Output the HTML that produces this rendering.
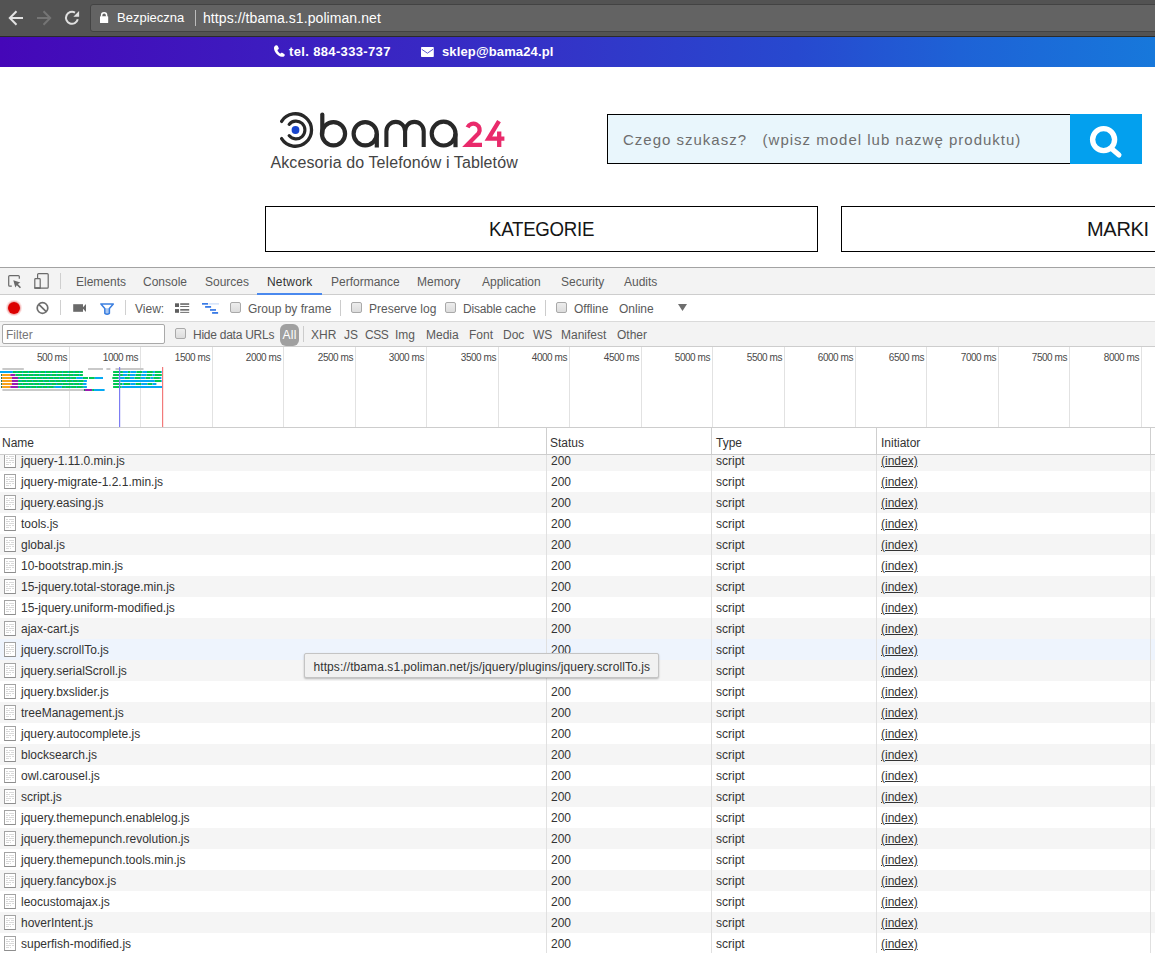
<!DOCTYPE html>
<html><head><meta charset="utf-8">
<style>
*{box-sizing:border-box;margin:0;padding:0}
html,body{width:1155px;height:953px;overflow:hidden;background:#fff;font-family:"Liberation Sans",sans-serif}
.a{position:absolute}
#chrome{position:absolute;left:0;top:0;width:1155px;height:37px;background:#535353;border-bottom:1px solid #2b2b2b}
#omni{position:absolute;left:90px;top:4px;width:1080px;height:28px;background:#636363;border:1px solid #434343;border-radius:3px}
#topbar{position:absolute;left:0;top:37px;width:1155px;height:30px;background:linear-gradient(90deg,#4507b8 0%,#3530c6 45%,#2749cf 69%,#1e62d6 83%,#1778db 100%)}
.tb{position:absolute;color:#fff;font-weight:bold;font-size:13px;top:44px;letter-spacing:0.3px}
.box{position:absolute;border:1px solid #000;background:#fff}
.navt{position:absolute;font-size:20px;color:#151515;top:217px;letter-spacing:-1.35px}
#dt{position:absolute;left:0;top:267px;width:1155px;height:686px;background:#fff;font-size:12px;color:#333}
#tabs{position:absolute;left:0;top:0;width:1155px;height:28px;background:#f3f3f3;border-top:1px solid #a3a3a3;border-bottom:1px solid #cdcdcd}
.tab{position:absolute;top:7px;color:#5a5a5a;font-size:12px;white-space:pre}
#tb2{position:absolute;left:0;top:28px;width:1155px;height:27px;background:#fff;border-bottom:1px solid #dadada}
#tb3{position:absolute;left:0;top:55px;width:1155px;height:25px;background:#f3f3f3;border-bottom:1px solid #cdcdcd}
.sep{position:absolute;width:1px;background:#ccc}
.lbl{position:absolute;color:#5a5a5a;font-size:12px;white-space:pre}
.cb{position:absolute;width:11px;height:11px;border:1px solid #a9a9a9;border-radius:2px;background:linear-gradient(#ededed,#dcdcdc)}
#ov{position:absolute;left:0;top:80px;width:1155px;height:81px;background:#fff;border-bottom:1px solid #cdcdcd}
.gl{position:absolute;top:0;width:1px;height:80px;background:#e2e2e2}
.tl{position:absolute;top:5px;width:58px;text-align:right;font-size:10px;color:#4a4a4a;white-space:pre;letter-spacing:-0.45px}
#hdr{position:absolute;left:0;top:161px;width:1155px;height:27px;background:#fff;border-bottom:1px solid #cdcdcd}
.hc{position:absolute;top:9px;font-size:12px;color:#333}
.vl{position:absolute;width:1px;background:#d0d0d0}
.r{position:absolute;left:0;width:1155px;height:21px;background:#fff}
.r.g{background:#f5f5f5}
.r.h{background:#eef4fd}
.r span{position:absolute;top:4px;font-size:12px;color:#333;white-space:pre}
.c0{left:21px} .c1{left:551px} .c2{left:716px} .c3{left:881px;text-decoration:underline}
.fi{position:absolute;left:4px;top:3px;width:12px;height:15px}
#tip{position:absolute;left:304px;top:653px;width:355px;height:25px;background:#f1f1f1;border:1px solid #c4c4c4;border-radius:2px;box-shadow:0 1px 2px rgba(0,0,0,.25);font-size:12px;color:#333;padding:6px 0 0 8.5px;white-space:pre;letter-spacing:0.08px}
</style></head><body>

<div id="chrome">
 <svg class="a" style="left:0;top:0" width="90" height="36">
  <path d="M23 18H10M16.5 11.3L9.8 18L16.5 24.7" stroke="#e2e2e2" stroke-width="2" fill="none"/>
  <path d="M37 18H50M43.5 11.3L50.2 18L43.5 24.7" stroke="#757575" stroke-width="2" fill="none"/>
  <path d="M77.8 19.35A6 6 0 1 1 75 12.6" stroke="#e0e0e0" stroke-width="2" fill="none"/>
  <path d="M79.1 10.9V16.8H73.3z" fill="#e0e0e0"/>
 </svg>
 <div id="omni"></div>
 <svg class="a" style="left:96px;top:8px" width="16" height="20">
  <path d="M5.6 8.8V7.3A2.5 2.5 0 0 1 10.6 7.3V8.8" stroke="#fff" stroke-width="1.5" fill="none"/>
  <rect x="4" y="8.2" width="8.2" height="6.9" fill="#fff" rx="0.6"/>
 </svg>
 <div class="a" style="left:117px;top:10px;font-size:13px;color:#fff">Bezpieczna</div>
 <div class="a" style="left:195px;top:10px;width:1px;height:16px;background:#bcbcbc"></div>
 <div class="a" style="left:203px;top:10px;font-size:14px;color:#fff;letter-spacing:0.07px">https://tbama.s1.poliman.net</div>
</div>
<div id="topbar"></div>
<svg class="a" style="left:273px;top:44px" width="12" height="14"><path d="M2.5 1.5c1-.6 1.8-.3 2.3.6l.9 1.8c.3.7 0 1.2-.6 1.6l-.7.5c.5 1.6 1.5 2.8 2.9 3.7l.6-.6c.5-.5 1.1-.6 1.7-.2l1.6 1.1c.7.5.8 1.2.2 1.9-.7.8-1.5 1.1-2.5.9C4.500 11.7 1.5 8.2 1 4.400.9 3.200 1.500 2.100 2.500 1.500z" fill="#fff"/></svg>
<div class="tb" style="left:289px;letter-spacing:0.35px">tel. 884-333-737</div>
<svg class="a" style="left:421px;top:47px" width="13" height="10"><rect x="0" y="0" width="12.8" height="10" rx="0.8" fill="#fff"/><path d="M0.6 2.2L6.4 6.2L12.2 2.2" stroke="#4a46c8" stroke-width="0.9" fill="none"/></svg>
<div class="tb" style="left:442px;letter-spacing:0.13px">sklep@bama24.pl</div>

<svg class="a" style="left:270px;top:108px" width="250" height="66">
 <g fill="none" stroke="#282828">
  <path d="M11.6 13.4A16.2 16.2 0 1 1 11.6 30.6" stroke-width="3.3" stroke-linecap="round"/>
  <path d="M19.1 16.4A8.9 8.9 0 1 1 19.1 27.6" stroke-width="3.1" stroke-linecap="round"/>
  <circle cx="63.5" cy="25.8" r="11.6" stroke-width="4.2"/>
  <path d="M52.3 6.5V25.8" stroke-width="4.2" stroke-linecap="round"/>
  <circle cx="95.2" cy="25.8" r="11.6" stroke-width="4.2"/>
  <path d="M106.8 25.8V39.5" stroke-width="4.2"/>
  <path d="M116.4 39V23.2A9.35 9.35 0 0 1 135.1 23.2V39M135.1 23.2A9.3 9.3 0 0 1 153.7 23.2V39" stroke-width="4.1"/>
  <circle cx="173.6" cy="25.6" r="11.9" stroke-width="4.2"/>
  <path d="M185.5 25.6V39.2" stroke-width="4.2"/>
 </g>
 <g fill="none" stroke="#e92a6b" stroke-width="4.3">
  <path d="M197.6 19.3A6.3 6.3 0 1 1 208.7 25.2L197.3 36.8H212" stroke-linejoin="miter"/>
  <path d="M229 13.2L218.4 30.6H234.4M229.2 23.5V39" stroke-linejoin="miter"/>
 </g>
 <circle cx="25.5" cy="22" r="3.9" fill="#1744cc"/>
 <text x="0.5" y="60" font-family="Liberation Sans" font-size="16" fill="#444" letter-spacing="0.1">Akcesoria do Telefonów i Tabletów</text>
</svg>

<div class="a" style="left:607px;top:114px;width:464px;height:50px;border:1px solid #000;border-right:none;background:#e9f6fc"></div>
<div class="a" style="left:623px;top:131px;font-size:15px;color:#6e6e6e;letter-spacing:1px;white-space:pre">Czego szukasz?   (wpisz model lub nazwę produktu)</div>
<div class="a" style="left:1070px;top:114px;width:72px;height:50px;background:#03a0ee"></div>
<svg class="a" style="left:1070px;top:114px" width="72" height="50"><circle cx="33.6" cy="25.6" r="11" stroke="#fff" stroke-width="5.4" fill="none"/><path d="M42 35l7 6" stroke="#fff" stroke-width="5" stroke-linecap="round"/></svg>

<div class="box" style="left:265px;top:206px;width:553px;height:46px"></div>
<div class="navt" style="left:488.5px;top:218px;letter-spacing:-0.3px;transform:scaleX(0.935);transform-origin:0 0">KATEGORIE</div>
<div class="box" style="left:841px;top:206px;width:330px;height:46px"></div>
<div class="navt" style="left:1087px;top:218px;letter-spacing:-0.3px;transform:scaleX(1.0);transform-origin:0 0">MARKI</div>

<div id="dt">
 <div id="tabs">
  <svg class="a" style="left:0;top:0" width="70" height="27">
   <path d="M11.8 18.2H9.7A1 1 0 0 1 8.7 17.2V8.6A1 1 0 0 1 9.7 7.6H18.3A1 1 0 0 1 19.3 8.6V10.8" stroke="#6a6a6a" stroke-width="1.2" fill="none"/>
   <path d="M13.3 12.2L20.3 14.6L17.9 16.1L21 19.2L19.9 20.3L16.8 17.2L15.3 19.6Z" fill="#6a6a6a"/>
   <rect x="37.6" y="5.6" width="10.6" height="14.6" rx="1" fill="none" stroke="#6a6a6a" stroke-width="1.2"/>
   <rect x="34.8" y="10.7" width="5.4" height="9.5" rx="0.8" fill="#f3f3f3" stroke="#6a6a6a" stroke-width="1.2"/>
   <rect x="34.3" y="19.2" width="6.3" height="1.6" fill="#6a6a6a"/>
   <rect x="60" y="5" width="1" height="16" fill="#cfcfcf"/>
  </svg>
  <span class="tab" style="left:76px">Elements</span>
  <span class="tab" style="left:143px">Console</span>
  <span class="tab" style="left:205px">Sources</span>
  <span class="tab" style="left:267px;color:#333;letter-spacing:0.2px">Network</span>
  <div class="a" style="left:257px;top:25px;width:65px;height:2px;background:#4a89ee"></div>
  <span class="tab" style="left:331px">Performance</span>
  <span class="tab" style="left:417px">Memory</span>
  <span class="tab" style="left:482px">Application</span>
  <span class="tab" style="left:561px">Security</span>
  <span class="tab" style="left:624px">Audits</span>
 </div>
 <div id="tb2">
  <svg class="a" style="left:0;top:0" width="230" height="26">
   <circle cx="14" cy="13" r="8" fill="#fbe3e3"/><circle cx="14" cy="13" r="7" fill="#f3b3b3"/>
   <circle cx="14" cy="13" r="6" fill="#dc0000"/>
   <circle cx="42.5" cy="13" r="5.3" stroke="#6e6e6e" stroke-width="1.7" fill="none"/>
   <path d="M38.8 9.3l7.4 7.4" stroke="#6e6e6e" stroke-width="1.7"/>
   <rect x="60" y="5" width="1" height="15" fill="#d0d0d0"/>
   <rect x="73.2" y="9.2" width="9.8" height="7.6" fill="#6a6a6a"/>
   <path d="M82.3 13L86 9V17z" fill="#6a6a6a"/>
   <path d="M104.8 13.3H109.4V18.3Q107.1 20 104.8 18.3Z" fill="#a9c7f2"/><path d="M100.9 8.9H113.3L109.4 13.6V18.3Q107.1 20 104.8 18.3V13.6Z" fill="none" stroke="#3b7fe0" stroke-width="1.5" stroke-linejoin="round"/>
   <rect x="125" y="5" width="1" height="15" fill="#d0d0d0"/>
   <g fill="#5f5f5f"><rect x="175" y="8.3" width="4" height="3.7"/><rect x="180.2" y="8.3" width="9" height="1.5"/><rect x="180.2" y="11.1" width="9" height="0.9"/>
   <rect x="175" y="14.1" width="4" height="3.7"/><rect x="180.2" y="14.1" width="9" height="1.5"/><rect x="180.2" y="16.9" width="9" height="0.9"/></g>
   <rect x="208.5" y="8" width="10.5" height="1.7" fill="#d8e5fb"/>
   <g fill="#3a7be6"><rect x="202" y="8" width="6" height="1.7"/><rect x="205.1" y="11" width="6" height="1.8"/><rect x="210" y="14.1" width="6" height="1.7"/><rect x="212.1" y="17" width="6" height="1.8"/></g>
  </svg>
  <span class="lbl" style="left:135px;top:7px">View:</span>
  <i class="cb" style="left:230px;top:7px"></i>
  <span class="lbl" style="left:248px;top:7px">Group by frame</span>
  <div class="sep" style="left:340px;top:5px;height:16px"></div>
  <i class="cb" style="left:351px;top:7px"></i>
  <span class="lbl" style="left:369px;top:7px">Preserve log</span>
  <i class="cb" style="left:445px;top:7px"></i>
  <span class="lbl" style="left:463px;top:7px;letter-spacing:-0.2px">Disable cache</span>
  <div class="sep" style="left:545px;top:5px;height:16px"></div>
  <i class="cb" style="left:556px;top:7px"></i>
  <span class="lbl" style="left:574px;top:7px">Offline</span>
  <span class="lbl" style="left:619px;top:7px">Online</span>
  <svg class="a" style="left:678px;top:9px" width="10" height="8"><path d="M0 0h9l-4.5 7z" fill="#6e6e6e"/></svg>
 </div>
 <div id="tb3">
  <div class="a" style="left:2px;top:2px;width:163px;height:20px;border:1px solid #a9a9a9;border-radius:2px;background:#fff"></div>
  <span class="lbl" style="left:6px;top:6px;color:#777">Filter</span>
  <i class="cb" style="left:175px;top:6px"></i>
  <span class="lbl" style="left:193px;top:6px;letter-spacing:-0.25px">Hide data URLs</span>
  <div class="a" style="left:280px;top:2px;width:19px;height:22px;border-radius:6px;background:#a0a0a0"></div>
  <span class="lbl" style="left:282.5px;top:6px;color:#fff;letter-spacing:0.3px">All</span>
  <div class="sep" style="left:303px;top:4px;height:16px"></div>
  <span class="lbl" style="left:311px;top:6px">XHR</span>
  <span class="lbl" style="left:344px;top:6px">JS</span>
  <span class="lbl" style="left:365px;top:6px;letter-spacing:-0.4px">CSS</span>
  <span class="lbl" style="left:395px;top:6px">Img</span>
  <span class="lbl" style="left:426px;top:6px">Media</span>
  <span class="lbl" style="left:469px;top:6px">Font</span>
  <span class="lbl" style="left:503px;top:6px">Doc</span>
  <span class="lbl" style="left:533px;top:6px">WS</span>
  <span class="lbl" style="left:561px;top:6px">Manifest</span>
  <span class="lbl" style="left:617px;top:6px">Other</span>
 </div>
 <div id="ov">
<div class="gl" style="left:69px"></div><div class="tl" style="left:9px">500 ms</div>
<div class="gl" style="left:140px"></div><div class="tl" style="left:80px">1000 ms</div>
<div class="gl" style="left:212px"></div><div class="tl" style="left:152px">1500 ms</div>
<div class="gl" style="left:283px"></div><div class="tl" style="left:223px">2000 ms</div>
<div class="gl" style="left:355px"></div><div class="tl" style="left:295px">2500 ms</div>
<div class="gl" style="left:426px"></div><div class="tl" style="left:366px">3000 ms</div>
<div class="gl" style="left:498px"></div><div class="tl" style="left:438px">3500 ms</div>
<div class="gl" style="left:569px"></div><div class="tl" style="left:509px">4000 ms</div>
<div class="gl" style="left:641px"></div><div class="tl" style="left:581px">4500 ms</div>
<div class="gl" style="left:712px"></div><div class="tl" style="left:652px">5000 ms</div>
<div class="gl" style="left:784px"></div><div class="tl" style="left:724px">5500 ms</div>
<div class="gl" style="left:855px"></div><div class="tl" style="left:795px">6000 ms</div>
<div class="gl" style="left:926px"></div><div class="tl" style="left:866px">6500 ms</div>
<div class="gl" style="left:998px"></div><div class="tl" style="left:938px">7000 ms</div>
<div class="gl" style="left:1069px"></div><div class="tl" style="left:1009px">7500 ms</div>
<div class="gl" style="left:1141px"></div><div class="tl" style="left:1081px">8000 ms</div>
  <svg class="a" style="left:0;top:0" width="200" height="80"><rect x="2.4" y="21" width="21.4" height="2" fill="#c9c9c9"/>
<rect x="88.0" y="21" width="15.0" height="2" fill="#c9c9c9"/>
<rect x="106.4" y="21" width="4.0" height="2" fill="#c9c9c9"/>
<rect x="115.5" y="21" width="28.0" height="2" fill="#c9c9c9"/>
<rect x="0.0" y="24" width="12.9" height="2" fill="#03a9f4"/>
<rect x="12.9" y="24" width="70.0" height="2" fill="#00c853"/>
<rect x="113.1" y="24" width="9.8" height="2" fill="#00c853"/>
<rect x="122.9" y="24" width="5.0" height="2" fill="#03a9f4"/>
<rect x="127.9" y="24" width="2.4" height="2" fill="#00c853"/>
<rect x="130.3" y="24" width="6.2" height="2" fill="#03a9f4"/>
<rect x="136.5" y="24" width="5.9" height="2" fill="#00c853"/>
<rect x="142.4" y="24" width="4.6" height="2" fill="#03a9f4"/>
<rect x="147.0" y="24" width="5.9" height="2" fill="#00c853"/>
<rect x="152.9" y="24" width="1.9" height="2" fill="#03a9f4"/>
<rect x="154.8" y="24" width="6.2" height="2" fill="#00c853"/>
<rect x="161.0" y="24" width="0.8" height="2" fill="#03a9f4"/>
<rect x="16.5" y="24" width="1" height="2" fill="#03a9f4" opacity="0.7"/>
<rect x="22.2" y="24" width="1" height="2" fill="#03a9f4" opacity="0.7"/>
<rect x="27.9" y="24" width="1" height="2" fill="#03a9f4" opacity="0.7"/>
<rect x="33.6" y="24" width="1" height="2" fill="#03a9f4" opacity="0.7"/>
<rect x="39.3" y="24" width="1" height="2" fill="#03a9f4" opacity="0.7"/>
<rect x="45.0" y="24" width="1" height="2" fill="#03a9f4" opacity="0.7"/>
<rect x="50.7" y="24" width="1" height="2" fill="#03a9f4" opacity="0.7"/>
<rect x="56.4" y="24" width="1" height="2" fill="#03a9f4" opacity="0.7"/>
<rect x="62.1" y="24" width="1" height="2" fill="#03a9f4" opacity="0.7"/>
<rect x="67.8" y="24" width="1" height="2" fill="#03a9f4" opacity="0.7"/>
<rect x="73.5" y="24" width="1" height="2" fill="#03a9f4" opacity="0.7"/>
<rect x="79.2" y="24" width="1" height="2" fill="#03a9f4" opacity="0.7"/>
<rect x="1.0" y="27" width="1.1" height="2" fill="#2a7a60"/>
<rect x="2.1" y="27" width="8.2" height="2" fill="#f9a21b"/>
<rect x="10.3" y="27" width="5.1" height="2" fill="#9c1ab1"/>
<rect x="15.4" y="27" width="67.5" height="2" fill="#00c853"/>
<rect x="113.1" y="27" width="9.8" height="2" fill="#00c853"/>
<rect x="122.9" y="27" width="4.6" height="2" fill="#03a9f4"/>
<rect x="127.5" y="27" width="2.4" height="2" fill="#00c853"/>
<rect x="129.9" y="27" width="5.8" height="2" fill="#03a9f4"/>
<rect x="135.7" y="27" width="5.5" height="2" fill="#00c853"/>
<rect x="141.2" y="27" width="5.4" height="2" fill="#03a9f4"/>
<rect x="146.6" y="27" width="5.9" height="2" fill="#00c853"/>
<rect x="152.5" y="27" width="2.3" height="2" fill="#03a9f4"/>
<rect x="154.8" y="27" width="7.0" height="2" fill="#00c853"/>
<rect x="22.0" y="27" width="1" height="2" fill="#03a9f4" opacity="0.7"/>
<rect x="27.7" y="27" width="1" height="2" fill="#03a9f4" opacity="0.7"/>
<rect x="33.4" y="27" width="1" height="2" fill="#03a9f4" opacity="0.7"/>
<rect x="39.1" y="27" width="1" height="2" fill="#03a9f4" opacity="0.7"/>
<rect x="44.8" y="27" width="1" height="2" fill="#03a9f4" opacity="0.7"/>
<rect x="50.5" y="27" width="1" height="2" fill="#03a9f4" opacity="0.7"/>
<rect x="56.2" y="27" width="1" height="2" fill="#03a9f4" opacity="0.7"/>
<rect x="61.9" y="27" width="1" height="2" fill="#03a9f4" opacity="0.7"/>
<rect x="67.6" y="27" width="1" height="2" fill="#03a9f4" opacity="0.7"/>
<rect x="73.3" y="27" width="1" height="2" fill="#03a9f4" opacity="0.7"/>
<rect x="79.0" y="27" width="1" height="2" fill="#03a9f4" opacity="0.7"/>
<rect x="1.0" y="30" width="1.1" height="2" fill="#2a7a60"/>
<rect x="2.1" y="30" width="9.8" height="2" fill="#f9a21b"/>
<rect x="11.9" y="30" width="6.2" height="2" fill="#9c1ab1"/>
<rect x="18.1" y="30" width="58.1" height="2" fill="#00c853"/>
<rect x="76.2" y="30" width="6.7" height="2" fill="#03a9f4"/>
<rect x="82.9" y="30" width="5.2" height="2" fill="#00c853"/>
<rect x="89.0" y="30" width="5.8" height="2" fill="#00c853"/>
<rect x="94.8" y="30" width="8.2" height="2" fill="#03a9f4"/>
<rect x="112.3" y="30" width="6.3" height="2" fill="#00c853"/>
<rect x="118.6" y="30" width="6.2" height="2" fill="#03a9f4"/>
<rect x="124.8" y="30" width="5.1" height="2" fill="#00c853"/>
<rect x="129.9" y="30" width="4.7" height="2" fill="#03a9f4"/>
<rect x="134.6" y="30" width="6.2" height="2" fill="#00c853"/>
<rect x="140.8" y="30" width="4.7" height="2" fill="#03a9f4"/>
<rect x="145.5" y="30" width="5.0" height="2" fill="#00c853"/>
<rect x="150.5" y="30" width="2.8" height="2" fill="#03a9f4"/>
<rect x="153.3" y="30" width="6.6" height="2" fill="#00c853"/>
<rect x="159.9" y="30" width="1.5" height="2" fill="#03a9f4"/>
<rect x="19.0" y="30" width="1" height="2" fill="#03a9f4" opacity="0.7"/>
<rect x="24.7" y="30" width="1" height="2" fill="#03a9f4" opacity="0.7"/>
<rect x="30.4" y="30" width="1" height="2" fill="#03a9f4" opacity="0.7"/>
<rect x="36.1" y="30" width="1" height="2" fill="#03a9f4" opacity="0.7"/>
<rect x="41.8" y="30" width="1" height="2" fill="#03a9f4" opacity="0.7"/>
<rect x="47.5" y="30" width="1" height="2" fill="#03a9f4" opacity="0.7"/>
<rect x="53.2" y="30" width="1" height="2" fill="#03a9f4" opacity="0.7"/>
<rect x="58.9" y="30" width="1" height="2" fill="#03a9f4" opacity="0.7"/>
<rect x="64.6" y="30" width="1" height="2" fill="#03a9f4" opacity="0.7"/>
<rect x="70.3" y="30" width="1" height="2" fill="#03a9f4" opacity="0.7"/>
<rect x="1.0" y="33" width="1.1" height="2" fill="#2a7a60"/>
<rect x="2.1" y="33" width="9.8" height="2" fill="#f9a21b"/>
<rect x="11.9" y="33" width="6.2" height="2" fill="#9c1ab1"/>
<rect x="18.1" y="33" width="65.7" height="2" fill="#00c853"/>
<rect x="83.8" y="33" width="3.1" height="2" fill="#03a9f4"/>
<rect x="113.1" y="33" width="7.4" height="2" fill="#00c853"/>
<rect x="120.5" y="33" width="34.3" height="2" fill="#03a9f4"/>
<rect x="154.8" y="33" width="6.2" height="2" fill="#00c853"/>
<rect x="161.0" y="33" width="0.8" height="2" fill="#03a9f4"/>
<rect x="20.5" y="33" width="1" height="2" fill="#03a9f4" opacity="0.7"/>
<rect x="26.2" y="33" width="1" height="2" fill="#03a9f4" opacity="0.7"/>
<rect x="31.9" y="33" width="1" height="2" fill="#03a9f4" opacity="0.7"/>
<rect x="37.6" y="33" width="1" height="2" fill="#03a9f4" opacity="0.7"/>
<rect x="43.3" y="33" width="1" height="2" fill="#03a9f4" opacity="0.7"/>
<rect x="49.0" y="33" width="1" height="2" fill="#03a9f4" opacity="0.7"/>
<rect x="54.7" y="33" width="1" height="2" fill="#03a9f4" opacity="0.7"/>
<rect x="60.4" y="33" width="1" height="2" fill="#03a9f4" opacity="0.7"/>
<rect x="66.1" y="33" width="1" height="2" fill="#03a9f4" opacity="0.7"/>
<rect x="71.8" y="33" width="1" height="2" fill="#03a9f4" opacity="0.7"/>
<rect x="77.5" y="33" width="1" height="2" fill="#03a9f4" opacity="0.7"/>
<rect x="1.0" y="36" width="1.1" height="2" fill="#2a7a60"/>
<rect x="2.1" y="36" width="9.8" height="2" fill="#f9a21b"/>
<rect x="11.9" y="36" width="6.2" height="2" fill="#9c1ab1"/>
<rect x="18.1" y="36" width="64.8" height="2" fill="#00c853"/>
<rect x="82.9" y="36" width="3.6" height="2" fill="#03a9f4"/>
<rect x="113.1" y="36" width="9.4" height="2" fill="#00c853"/>
<rect x="122.5" y="36" width="1.5" height="2" fill="#03a9f4"/>
<rect x="124.0" y="36" width="6.3" height="2" fill="#00c853"/>
<rect x="130.3" y="36" width="5.4" height="2" fill="#03a9f4"/>
<rect x="135.7" y="36" width="5.5" height="2" fill="#00c853"/>
<rect x="141.2" y="36" width="6.2" height="2" fill="#03a9f4"/>
<rect x="147.4" y="36" width="5.1" height="2" fill="#00c853"/>
<rect x="152.5" y="36" width="3.9" height="2" fill="#03a9f4"/>
<rect x="22.0" y="36" width="1" height="2" fill="#03a9f4" opacity="0.7"/>
<rect x="27.7" y="36" width="1" height="2" fill="#03a9f4" opacity="0.7"/>
<rect x="33.4" y="36" width="1" height="2" fill="#03a9f4" opacity="0.7"/>
<rect x="39.1" y="36" width="1" height="2" fill="#03a9f4" opacity="0.7"/>
<rect x="44.8" y="36" width="1" height="2" fill="#03a9f4" opacity="0.7"/>
<rect x="50.5" y="36" width="1" height="2" fill="#03a9f4" opacity="0.7"/>
<rect x="56.2" y="36" width="1" height="2" fill="#03a9f4" opacity="0.7"/>
<rect x="61.9" y="36" width="1" height="2" fill="#03a9f4" opacity="0.7"/>
<rect x="67.6" y="36" width="1" height="2" fill="#03a9f4" opacity="0.7"/>
<rect x="73.3" y="36" width="1" height="2" fill="#03a9f4" opacity="0.7"/>
<rect x="79.0" y="36" width="1" height="2" fill="#03a9f4" opacity="0.7"/>
<rect x="1.0" y="39" width="1.1" height="2" fill="#2a7a60"/>
<rect x="2.1" y="39" width="8.2" height="2" fill="#f9a21b"/>
<rect x="10.3" y="39" width="7.8" height="2" fill="#9c1ab1"/>
<rect x="18.1" y="39" width="36.7" height="2" fill="#00c853"/>
<rect x="54.8" y="39" width="7.1" height="2" fill="#03a9f4"/>
<rect x="61.9" y="39" width="21.9" height="2" fill="#00c853"/>
<rect x="83.8" y="39" width="3.1" height="2" fill="#03a9f4"/>
<rect x="113.1" y="39" width="8.6" height="2" fill="#00c853"/>
<rect x="121.7" y="39" width="40.5" height="2" fill="#03a9f4"/>
<rect x="19.0" y="39" width="1" height="2" fill="#03a9f4" opacity="0.7"/>
<rect x="24.7" y="39" width="1" height="2" fill="#03a9f4" opacity="0.7"/>
<rect x="30.4" y="39" width="1" height="2" fill="#03a9f4" opacity="0.7"/>
<rect x="36.1" y="39" width="1" height="2" fill="#03a9f4" opacity="0.7"/>
<rect x="41.8" y="39" width="1" height="2" fill="#03a9f4" opacity="0.7"/>
<rect x="47.5" y="39" width="1" height="2" fill="#03a9f4" opacity="0.7"/>
<rect x="53.2" y="39" width="1" height="2" fill="#03a9f4" opacity="0.7"/>
<rect x="64.6" y="39" width="1" height="2" fill="#03a9f4" opacity="0.7"/>
<rect x="70.3" y="39" width="1" height="2" fill="#03a9f4" opacity="0.7"/>
<rect x="76.0" y="39" width="1" height="2" fill="#03a9f4" opacity="0.7"/>
<rect x="81.7" y="39" width="1" height="2" fill="#03a9f4" opacity="0.7"/>
<rect x="2.4" y="42" width="81.5" height="2" fill="#c9c9c9"/>
<rect x="83.9" y="42" width="1.1" height="2" fill="#2a7a60"/>
<rect x="85.0" y="42" width="7.1" height="2" fill="#9c1ab1"/>
<rect x="92.1" y="42" width="1.9" height="2" fill="#00c853"/>
<rect x="94.0" y="42" width="10.6" height="2" fill="#03a9f4"/>
<rect x="119" y="20" width="1.2" height="60" fill="#7c7cf3"/>
<rect x="162" y="20" width="1.2" height="60" fill="#f27a7a"/></svg>
 </div>
 <div id="hdr">
  <span class="hc" style="left:2px;top:8px">Name</span>
  <span class="hc" style="left:550px;top:8px">Status</span>
  <span class="hc" style="left:716px;top:8px">Type</span>
  <span class="hc" style="left:881px;top:8px">Initiator</span>
 </div>
</div>
<div class="a" style="left:0;top:455px;width:1155px;height:498px;overflow:hidden">
 <div class="a" style="left:0;top:-455px;width:1155px;height:953px">
<div class="r g" style="top:450px"><svg class="fi" width="12" height="15"><rect x="0.5" y="0.5" width="11" height="14" fill="#fff" stroke="#a3a3a3"/><path d="M0.5 14.5h11" stroke="#8e8e8e"/><g fill="#d9d9d9"><rect x="2" y="3" width="2" height="1"/><rect x="5" y="3" width="5" height="1"/><rect x="2" y="5" width="4" height="1"/><rect x="7" y="5" width="3" height="1"/><rect x="2" y="7" width="2" height="1"/><rect x="5" y="7" width="5" height="1"/><rect x="2" y="9" width="5" height="1"/><rect x="8" y="9" width="2" height="1"/><rect x="2" y="11" width="3" height="1"/><rect x="6" y="11" width="1" height="1"/></g></svg><span class="c0">jquery-1.11.0.min.js</span><span class="c1">200</span><span class="c2">script</span><span class="c3">(index)</span></div>
<div class="r" style="top:471px"><svg class="fi" width="12" height="15"><rect x="0.5" y="0.5" width="11" height="14" fill="#fff" stroke="#a3a3a3"/><path d="M0.5 14.5h11" stroke="#8e8e8e"/><g fill="#d9d9d9"><rect x="2" y="3" width="2" height="1"/><rect x="5" y="3" width="5" height="1"/><rect x="2" y="5" width="4" height="1"/><rect x="7" y="5" width="3" height="1"/><rect x="2" y="7" width="2" height="1"/><rect x="5" y="7" width="5" height="1"/><rect x="2" y="9" width="5" height="1"/><rect x="8" y="9" width="2" height="1"/><rect x="2" y="11" width="3" height="1"/><rect x="6" y="11" width="1" height="1"/></g></svg><span class="c0">jquery-migrate-1.2.1.min.js</span><span class="c1">200</span><span class="c2">script</span><span class="c3">(index)</span></div>
<div class="r g" style="top:492px"><svg class="fi" width="12" height="15"><rect x="0.5" y="0.5" width="11" height="14" fill="#fff" stroke="#a3a3a3"/><path d="M0.5 14.5h11" stroke="#8e8e8e"/><g fill="#d9d9d9"><rect x="2" y="3" width="2" height="1"/><rect x="5" y="3" width="5" height="1"/><rect x="2" y="5" width="4" height="1"/><rect x="7" y="5" width="3" height="1"/><rect x="2" y="7" width="2" height="1"/><rect x="5" y="7" width="5" height="1"/><rect x="2" y="9" width="5" height="1"/><rect x="8" y="9" width="2" height="1"/><rect x="2" y="11" width="3" height="1"/><rect x="6" y="11" width="1" height="1"/></g></svg><span class="c0">jquery.easing.js</span><span class="c1">200</span><span class="c2">script</span><span class="c3">(index)</span></div>
<div class="r" style="top:513px"><svg class="fi" width="12" height="15"><rect x="0.5" y="0.5" width="11" height="14" fill="#fff" stroke="#a3a3a3"/><path d="M0.5 14.5h11" stroke="#8e8e8e"/><g fill="#d9d9d9"><rect x="2" y="3" width="2" height="1"/><rect x="5" y="3" width="5" height="1"/><rect x="2" y="5" width="4" height="1"/><rect x="7" y="5" width="3" height="1"/><rect x="2" y="7" width="2" height="1"/><rect x="5" y="7" width="5" height="1"/><rect x="2" y="9" width="5" height="1"/><rect x="8" y="9" width="2" height="1"/><rect x="2" y="11" width="3" height="1"/><rect x="6" y="11" width="1" height="1"/></g></svg><span class="c0">tools.js</span><span class="c1">200</span><span class="c2">script</span><span class="c3">(index)</span></div>
<div class="r g" style="top:534px"><svg class="fi" width="12" height="15"><rect x="0.5" y="0.5" width="11" height="14" fill="#fff" stroke="#a3a3a3"/><path d="M0.5 14.5h11" stroke="#8e8e8e"/><g fill="#d9d9d9"><rect x="2" y="3" width="2" height="1"/><rect x="5" y="3" width="5" height="1"/><rect x="2" y="5" width="4" height="1"/><rect x="7" y="5" width="3" height="1"/><rect x="2" y="7" width="2" height="1"/><rect x="5" y="7" width="5" height="1"/><rect x="2" y="9" width="5" height="1"/><rect x="8" y="9" width="2" height="1"/><rect x="2" y="11" width="3" height="1"/><rect x="6" y="11" width="1" height="1"/></g></svg><span class="c0">global.js</span><span class="c1">200</span><span class="c2">script</span><span class="c3">(index)</span></div>
<div class="r" style="top:555px"><svg class="fi" width="12" height="15"><rect x="0.5" y="0.5" width="11" height="14" fill="#fff" stroke="#a3a3a3"/><path d="M0.5 14.5h11" stroke="#8e8e8e"/><g fill="#d9d9d9"><rect x="2" y="3" width="2" height="1"/><rect x="5" y="3" width="5" height="1"/><rect x="2" y="5" width="4" height="1"/><rect x="7" y="5" width="3" height="1"/><rect x="2" y="7" width="2" height="1"/><rect x="5" y="7" width="5" height="1"/><rect x="2" y="9" width="5" height="1"/><rect x="8" y="9" width="2" height="1"/><rect x="2" y="11" width="3" height="1"/><rect x="6" y="11" width="1" height="1"/></g></svg><span class="c0">10-bootstrap.min.js</span><span class="c1">200</span><span class="c2">script</span><span class="c3">(index)</span></div>
<div class="r g" style="top:576px"><svg class="fi" width="12" height="15"><rect x="0.5" y="0.5" width="11" height="14" fill="#fff" stroke="#a3a3a3"/><path d="M0.5 14.5h11" stroke="#8e8e8e"/><g fill="#d9d9d9"><rect x="2" y="3" width="2" height="1"/><rect x="5" y="3" width="5" height="1"/><rect x="2" y="5" width="4" height="1"/><rect x="7" y="5" width="3" height="1"/><rect x="2" y="7" width="2" height="1"/><rect x="5" y="7" width="5" height="1"/><rect x="2" y="9" width="5" height="1"/><rect x="8" y="9" width="2" height="1"/><rect x="2" y="11" width="3" height="1"/><rect x="6" y="11" width="1" height="1"/></g></svg><span class="c0">15-jquery.total-storage.min.js</span><span class="c1">200</span><span class="c2">script</span><span class="c3">(index)</span></div>
<div class="r" style="top:597px"><svg class="fi" width="12" height="15"><rect x="0.5" y="0.5" width="11" height="14" fill="#fff" stroke="#a3a3a3"/><path d="M0.5 14.5h11" stroke="#8e8e8e"/><g fill="#d9d9d9"><rect x="2" y="3" width="2" height="1"/><rect x="5" y="3" width="5" height="1"/><rect x="2" y="5" width="4" height="1"/><rect x="7" y="5" width="3" height="1"/><rect x="2" y="7" width="2" height="1"/><rect x="5" y="7" width="5" height="1"/><rect x="2" y="9" width="5" height="1"/><rect x="8" y="9" width="2" height="1"/><rect x="2" y="11" width="3" height="1"/><rect x="6" y="11" width="1" height="1"/></g></svg><span class="c0">15-jquery.uniform-modified.js</span><span class="c1">200</span><span class="c2">script</span><span class="c3">(index)</span></div>
<div class="r g" style="top:618px"><svg class="fi" width="12" height="15"><rect x="0.5" y="0.5" width="11" height="14" fill="#fff" stroke="#a3a3a3"/><path d="M0.5 14.5h11" stroke="#8e8e8e"/><g fill="#d9d9d9"><rect x="2" y="3" width="2" height="1"/><rect x="5" y="3" width="5" height="1"/><rect x="2" y="5" width="4" height="1"/><rect x="7" y="5" width="3" height="1"/><rect x="2" y="7" width="2" height="1"/><rect x="5" y="7" width="5" height="1"/><rect x="2" y="9" width="5" height="1"/><rect x="8" y="9" width="2" height="1"/><rect x="2" y="11" width="3" height="1"/><rect x="6" y="11" width="1" height="1"/></g></svg><span class="c0">ajax-cart.js</span><span class="c1">200</span><span class="c2">script</span><span class="c3">(index)</span></div>
<div class="r h" style="top:639px"><svg class="fi" width="12" height="15"><rect x="0.5" y="0.5" width="11" height="14" fill="#fff" stroke="#a3a3a3"/><path d="M0.5 14.5h11" stroke="#8e8e8e"/><g fill="#d9d9d9"><rect x="2" y="3" width="2" height="1"/><rect x="5" y="3" width="5" height="1"/><rect x="2" y="5" width="4" height="1"/><rect x="7" y="5" width="3" height="1"/><rect x="2" y="7" width="2" height="1"/><rect x="5" y="7" width="5" height="1"/><rect x="2" y="9" width="5" height="1"/><rect x="8" y="9" width="2" height="1"/><rect x="2" y="11" width="3" height="1"/><rect x="6" y="11" width="1" height="1"/></g></svg><span class="c0">jquery.scrollTo.js</span><span class="c1">200</span><span class="c2">script</span><span class="c3">(index)</span></div>
<div class="r g" style="top:660px"><svg class="fi" width="12" height="15"><rect x="0.5" y="0.5" width="11" height="14" fill="#fff" stroke="#a3a3a3"/><path d="M0.5 14.5h11" stroke="#8e8e8e"/><g fill="#d9d9d9"><rect x="2" y="3" width="2" height="1"/><rect x="5" y="3" width="5" height="1"/><rect x="2" y="5" width="4" height="1"/><rect x="7" y="5" width="3" height="1"/><rect x="2" y="7" width="2" height="1"/><rect x="5" y="7" width="5" height="1"/><rect x="2" y="9" width="5" height="1"/><rect x="8" y="9" width="2" height="1"/><rect x="2" y="11" width="3" height="1"/><rect x="6" y="11" width="1" height="1"/></g></svg><span class="c0">jquery.serialScroll.js</span><span class="c1">200</span><span class="c2">script</span><span class="c3">(index)</span></div>
<div class="r" style="top:681px"><svg class="fi" width="12" height="15"><rect x="0.5" y="0.5" width="11" height="14" fill="#fff" stroke="#a3a3a3"/><path d="M0.5 14.5h11" stroke="#8e8e8e"/><g fill="#d9d9d9"><rect x="2" y="3" width="2" height="1"/><rect x="5" y="3" width="5" height="1"/><rect x="2" y="5" width="4" height="1"/><rect x="7" y="5" width="3" height="1"/><rect x="2" y="7" width="2" height="1"/><rect x="5" y="7" width="5" height="1"/><rect x="2" y="9" width="5" height="1"/><rect x="8" y="9" width="2" height="1"/><rect x="2" y="11" width="3" height="1"/><rect x="6" y="11" width="1" height="1"/></g></svg><span class="c0">jquery.bxslider.js</span><span class="c1">200</span><span class="c2">script</span><span class="c3">(index)</span></div>
<div class="r g" style="top:702px"><svg class="fi" width="12" height="15"><rect x="0.5" y="0.5" width="11" height="14" fill="#fff" stroke="#a3a3a3"/><path d="M0.5 14.5h11" stroke="#8e8e8e"/><g fill="#d9d9d9"><rect x="2" y="3" width="2" height="1"/><rect x="5" y="3" width="5" height="1"/><rect x="2" y="5" width="4" height="1"/><rect x="7" y="5" width="3" height="1"/><rect x="2" y="7" width="2" height="1"/><rect x="5" y="7" width="5" height="1"/><rect x="2" y="9" width="5" height="1"/><rect x="8" y="9" width="2" height="1"/><rect x="2" y="11" width="3" height="1"/><rect x="6" y="11" width="1" height="1"/></g></svg><span class="c0">treeManagement.js</span><span class="c1">200</span><span class="c2">script</span><span class="c3">(index)</span></div>
<div class="r" style="top:723px"><svg class="fi" width="12" height="15"><rect x="0.5" y="0.5" width="11" height="14" fill="#fff" stroke="#a3a3a3"/><path d="M0.5 14.5h11" stroke="#8e8e8e"/><g fill="#d9d9d9"><rect x="2" y="3" width="2" height="1"/><rect x="5" y="3" width="5" height="1"/><rect x="2" y="5" width="4" height="1"/><rect x="7" y="5" width="3" height="1"/><rect x="2" y="7" width="2" height="1"/><rect x="5" y="7" width="5" height="1"/><rect x="2" y="9" width="5" height="1"/><rect x="8" y="9" width="2" height="1"/><rect x="2" y="11" width="3" height="1"/><rect x="6" y="11" width="1" height="1"/></g></svg><span class="c0">jquery.autocomplete.js</span><span class="c1">200</span><span class="c2">script</span><span class="c3">(index)</span></div>
<div class="r g" style="top:744px"><svg class="fi" width="12" height="15"><rect x="0.5" y="0.5" width="11" height="14" fill="#fff" stroke="#a3a3a3"/><path d="M0.5 14.5h11" stroke="#8e8e8e"/><g fill="#d9d9d9"><rect x="2" y="3" width="2" height="1"/><rect x="5" y="3" width="5" height="1"/><rect x="2" y="5" width="4" height="1"/><rect x="7" y="5" width="3" height="1"/><rect x="2" y="7" width="2" height="1"/><rect x="5" y="7" width="5" height="1"/><rect x="2" y="9" width="5" height="1"/><rect x="8" y="9" width="2" height="1"/><rect x="2" y="11" width="3" height="1"/><rect x="6" y="11" width="1" height="1"/></g></svg><span class="c0">blocksearch.js</span><span class="c1">200</span><span class="c2">script</span><span class="c3">(index)</span></div>
<div class="r" style="top:765px"><svg class="fi" width="12" height="15"><rect x="0.5" y="0.5" width="11" height="14" fill="#fff" stroke="#a3a3a3"/><path d="M0.5 14.5h11" stroke="#8e8e8e"/><g fill="#d9d9d9"><rect x="2" y="3" width="2" height="1"/><rect x="5" y="3" width="5" height="1"/><rect x="2" y="5" width="4" height="1"/><rect x="7" y="5" width="3" height="1"/><rect x="2" y="7" width="2" height="1"/><rect x="5" y="7" width="5" height="1"/><rect x="2" y="9" width="5" height="1"/><rect x="8" y="9" width="2" height="1"/><rect x="2" y="11" width="3" height="1"/><rect x="6" y="11" width="1" height="1"/></g></svg><span class="c0">owl.carousel.js</span><span class="c1">200</span><span class="c2">script</span><span class="c3">(index)</span></div>
<div class="r g" style="top:786px"><svg class="fi" width="12" height="15"><rect x="0.5" y="0.5" width="11" height="14" fill="#fff" stroke="#a3a3a3"/><path d="M0.5 14.5h11" stroke="#8e8e8e"/><g fill="#d9d9d9"><rect x="2" y="3" width="2" height="1"/><rect x="5" y="3" width="5" height="1"/><rect x="2" y="5" width="4" height="1"/><rect x="7" y="5" width="3" height="1"/><rect x="2" y="7" width="2" height="1"/><rect x="5" y="7" width="5" height="1"/><rect x="2" y="9" width="5" height="1"/><rect x="8" y="9" width="2" height="1"/><rect x="2" y="11" width="3" height="1"/><rect x="6" y="11" width="1" height="1"/></g></svg><span class="c0">script.js</span><span class="c1">200</span><span class="c2">script</span><span class="c3">(index)</span></div>
<div class="r" style="top:807px"><svg class="fi" width="12" height="15"><rect x="0.5" y="0.5" width="11" height="14" fill="#fff" stroke="#a3a3a3"/><path d="M0.5 14.5h11" stroke="#8e8e8e"/><g fill="#d9d9d9"><rect x="2" y="3" width="2" height="1"/><rect x="5" y="3" width="5" height="1"/><rect x="2" y="5" width="4" height="1"/><rect x="7" y="5" width="3" height="1"/><rect x="2" y="7" width="2" height="1"/><rect x="5" y="7" width="5" height="1"/><rect x="2" y="9" width="5" height="1"/><rect x="8" y="9" width="2" height="1"/><rect x="2" y="11" width="3" height="1"/><rect x="6" y="11" width="1" height="1"/></g></svg><span class="c0">jquery.themepunch.enablelog.js</span><span class="c1">200</span><span class="c2">script</span><span class="c3">(index)</span></div>
<div class="r g" style="top:828px"><svg class="fi" width="12" height="15"><rect x="0.5" y="0.5" width="11" height="14" fill="#fff" stroke="#a3a3a3"/><path d="M0.5 14.5h11" stroke="#8e8e8e"/><g fill="#d9d9d9"><rect x="2" y="3" width="2" height="1"/><rect x="5" y="3" width="5" height="1"/><rect x="2" y="5" width="4" height="1"/><rect x="7" y="5" width="3" height="1"/><rect x="2" y="7" width="2" height="1"/><rect x="5" y="7" width="5" height="1"/><rect x="2" y="9" width="5" height="1"/><rect x="8" y="9" width="2" height="1"/><rect x="2" y="11" width="3" height="1"/><rect x="6" y="11" width="1" height="1"/></g></svg><span class="c0">jquery.themepunch.revolution.js</span><span class="c1">200</span><span class="c2">script</span><span class="c3">(index)</span></div>
<div class="r" style="top:849px"><svg class="fi" width="12" height="15"><rect x="0.5" y="0.5" width="11" height="14" fill="#fff" stroke="#a3a3a3"/><path d="M0.5 14.5h11" stroke="#8e8e8e"/><g fill="#d9d9d9"><rect x="2" y="3" width="2" height="1"/><rect x="5" y="3" width="5" height="1"/><rect x="2" y="5" width="4" height="1"/><rect x="7" y="5" width="3" height="1"/><rect x="2" y="7" width="2" height="1"/><rect x="5" y="7" width="5" height="1"/><rect x="2" y="9" width="5" height="1"/><rect x="8" y="9" width="2" height="1"/><rect x="2" y="11" width="3" height="1"/><rect x="6" y="11" width="1" height="1"/></g></svg><span class="c0">jquery.themepunch.tools.min.js</span><span class="c1">200</span><span class="c2">script</span><span class="c3">(index)</span></div>
<div class="r g" style="top:870px"><svg class="fi" width="12" height="15"><rect x="0.5" y="0.5" width="11" height="14" fill="#fff" stroke="#a3a3a3"/><path d="M0.5 14.5h11" stroke="#8e8e8e"/><g fill="#d9d9d9"><rect x="2" y="3" width="2" height="1"/><rect x="5" y="3" width="5" height="1"/><rect x="2" y="5" width="4" height="1"/><rect x="7" y="5" width="3" height="1"/><rect x="2" y="7" width="2" height="1"/><rect x="5" y="7" width="5" height="1"/><rect x="2" y="9" width="5" height="1"/><rect x="8" y="9" width="2" height="1"/><rect x="2" y="11" width="3" height="1"/><rect x="6" y="11" width="1" height="1"/></g></svg><span class="c0">jquery.fancybox.js</span><span class="c1">200</span><span class="c2">script</span><span class="c3">(index)</span></div>
<div class="r" style="top:891px"><svg class="fi" width="12" height="15"><rect x="0.5" y="0.5" width="11" height="14" fill="#fff" stroke="#a3a3a3"/><path d="M0.5 14.5h11" stroke="#8e8e8e"/><g fill="#d9d9d9"><rect x="2" y="3" width="2" height="1"/><rect x="5" y="3" width="5" height="1"/><rect x="2" y="5" width="4" height="1"/><rect x="7" y="5" width="3" height="1"/><rect x="2" y="7" width="2" height="1"/><rect x="5" y="7" width="5" height="1"/><rect x="2" y="9" width="5" height="1"/><rect x="8" y="9" width="2" height="1"/><rect x="2" y="11" width="3" height="1"/><rect x="6" y="11" width="1" height="1"/></g></svg><span class="c0">leocustomajax.js</span><span class="c1">200</span><span class="c2">script</span><span class="c3">(index)</span></div>
<div class="r g" style="top:912px"><svg class="fi" width="12" height="15"><rect x="0.5" y="0.5" width="11" height="14" fill="#fff" stroke="#a3a3a3"/><path d="M0.5 14.5h11" stroke="#8e8e8e"/><g fill="#d9d9d9"><rect x="2" y="3" width="2" height="1"/><rect x="5" y="3" width="5" height="1"/><rect x="2" y="5" width="4" height="1"/><rect x="7" y="5" width="3" height="1"/><rect x="2" y="7" width="2" height="1"/><rect x="5" y="7" width="5" height="1"/><rect x="2" y="9" width="5" height="1"/><rect x="8" y="9" width="2" height="1"/><rect x="2" y="11" width="3" height="1"/><rect x="6" y="11" width="1" height="1"/></g></svg><span class="c0">hoverIntent.js</span><span class="c1">200</span><span class="c2">script</span><span class="c3">(index)</span></div>
<div class="r" style="top:933px"><svg class="fi" width="12" height="15"><rect x="0.5" y="0.5" width="11" height="14" fill="#fff" stroke="#a3a3a3"/><path d="M0.5 14.5h11" stroke="#8e8e8e"/><g fill="#d9d9d9"><rect x="2" y="3" width="2" height="1"/><rect x="5" y="3" width="5" height="1"/><rect x="2" y="5" width="4" height="1"/><rect x="7" y="5" width="3" height="1"/><rect x="2" y="7" width="2" height="1"/><rect x="5" y="7" width="5" height="1"/><rect x="2" y="9" width="5" height="1"/><rect x="8" y="9" width="2" height="1"/><rect x="2" y="11" width="3" height="1"/><rect x="6" y="11" width="1" height="1"/></g></svg><span class="c0">superfish-modified.js</span><span class="c1">200</span><span class="c2">script</span><span class="c3">(index)</span></div>
 </div>
</div>
<div class="vl" style="left:546px;top:428px;height:26px;background:#cfcfcf"></div>
<div class="vl" style="left:546px;top:455px;height:498px;background:#e0e0e0"></div>
<div class="vl" style="left:711px;top:428px;height:26px;background:#cfcfcf"></div>
<div class="vl" style="left:711px;top:455px;height:498px;background:#e0e0e0"></div>
<div class="vl" style="left:876px;top:428px;height:26px;background:#cfcfcf"></div>
<div class="vl" style="left:876px;top:455px;height:498px;background:#e0e0e0"></div>
<div class="vl" style="left:1150px;top:428px;height:26px;background:#cfcfcf"></div>
<div class="vl" style="left:1150px;top:455px;height:498px;background:#e0e0e0"></div>

<div id="tip">https://tbama.s1.poliman.net/js/jquery/plugins/jquery.scrollTo.js</div>
</body></html>
